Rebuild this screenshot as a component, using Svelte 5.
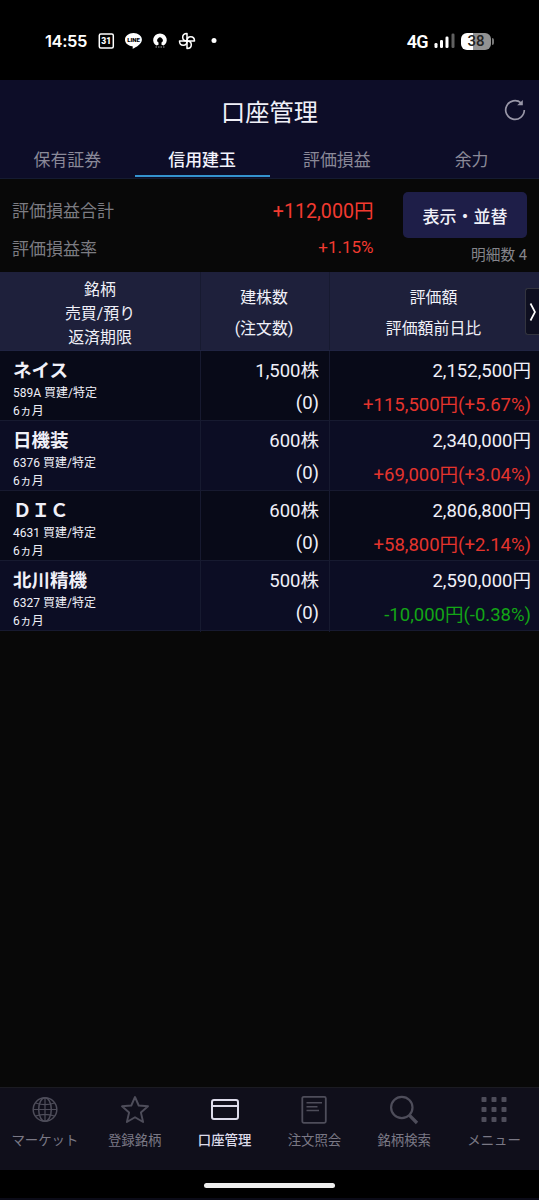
<script>
  let activeTab = 1;
  let activeNav = 2;

  const tabs = ["保有証券", "信用建玉", "評価損益", "余力"];

  const positions = [
    { name: "ネイス", code: "589A", shares: "1,500", value: "2,152,500", change: "+115,500円(+5.67%)" },
    { name: "日機装", code: "6376", shares: "600", value: "2,340,000", change: "+69,000円(+3.04%)" },
    { name: "ＤＩＣ", code: "4631", shares: "600", value: "2,806,800", change: "+58,800円(+2.14%)" },
    { name: "北川精機", code: "6327", shares: "500", value: "2,590,000", change: "-10,000円(-0.38%)" },
  ];

  const navItems = [
    { icon: "globe", label: "マーケット" },
    { icon: "star", label: "登録銘柄" },
    { icon: "card", label: "口座管理" },
    { icon: "doc", label: "注文照会" },
    { icon: "search", label: "銘柄検索" },
    { icon: "grid", label: "メニュー" },
  ];

  const dots = [0, 10, 20];
</script>

<div class="screen">
  <div class="status">
    <span class="clock">14:55</span>
    <svg class="notifications" width="130" height="24" viewBox="98 29 130 24">
      <rect x="99.3" y="34" width="14" height="14" rx="1.5" fill="none" stroke="#fff" stroke-width="1.5" />
      <text x="106.3" y="44.1" class="tiny" font-size="8.5" fill="#fff">31</text>
      <path d="M133.500 33c-4.800 0-8.500 3-8.500 6.700 0 3.300 3 6 7.200 6.600l.6.300-.2 2.200c3.500-1.500 9.300-5 9.300-9.100 0-3.700-3.700-6.700-8.400-6.700z" fill="#fff" />
      <text x="133.500" y="41.900" class="tiny" font-size="6" fill="#000">LINE</text>
      <path d="M156.500 45.500c-5.500-2.500-4-12 3.500-12s9 9.500 3.500 12l-2-.8v-2.200a2.700 2.700 0 1 0-3 0v2.200z" fill="#fff" />
      <path d="M155.500 47h10" stroke="#999" stroke-width="1" stroke-dasharray="1.500 1" />
      <g fill="none" stroke="#fff" stroke-width="1.500" stroke-linejoin="round">
        <path d="M187 41v-7.500c-2.600 0-4.300 1.600-4.300 3.800s1.800 3.700 4.300 3.700" />
        <path d="M187 41h7.500c0-2.600-1.600-4.300-3.800-4.300s-3.700 1.800-3.700 4.300" />
        <path d="M187 41v7.500c2.600 0 4.300-1.600 4.300-3.800s-1.800-3.700-4.300-3.700" />
        <path d="M187 41h-7.500c0 2.600 1.600 4.300 3.800 4.300s3.700-1.800 3.700-4.300" />
      </g>
      <circle cx="214" cy="40.500" r="2.500" fill="#fff" />
    </svg>
    <span class="network">4G</span>
    <svg class="signal" width="22" height="16" viewBox="0 0 22 16">
      <rect x="0.500" y="10" width="3" height="5" rx="1.300" fill="#fff" />
      <rect x="6" y="7" width="3" height="8" rx="1.300" fill="#fff" />
      <rect x="11.500" y="3.500" width="3" height="11.500" rx="1.300" fill="#fff" />
      <rect x="17.500" y="0.500" width="3" height="14.500" rx="1.300" fill="#606060" />
    </svg>
    <div class="battery">38</div>
    <div class="battery-tip"></div>
  </div>

  <header>
    <div class="title-bar">
      <h1>口座管理</h1>
      <svg class="refresh" width="24" height="24" viewBox="0 0 24 24">
        <path d="M21.300 12a9.300 9.300 0 1 1-3.300-7.100" fill="none" stroke="#9997a8" stroke-width="1.700" />
        <path d="M19.800 2v5.300h-5.600z" fill="#9997a8" />
      </svg>
    </div>
    <nav class="tabs">
      {#each tabs as tab, i}
        <button class="tab" class:active={i === activeTab} on:click={() => (activeTab = i)}>{tab}</button>
      {/each}
    </nav>
  </header>

  <section class="summary">
    <div class="totals">
      <div class="total"><span>評価損益合計</span><b class="amount">+112,000円</b></div>
      <div class="total"><span>評価損益率</span><b>+1.15%</b></div>
    </div>
    <div class="controls">
      <button class="sort">表示・並替</button>
      <span class="count">明細数 4</span>
    </div>
  </section>

  <div class="table-head">
    <div class="three"><span>銘柄</span><span>売買/預り</span><span>返済期限</span></div>
    <div><span>建株数</span><span>(注文数)</span></div>
    <div><span>評価額</span><span>評価額前日比</span></div>
    <button class="next" aria-label="次へ">
      <svg width="8" height="20" viewBox="0 0 8 20">
        <path d="M1.500 1.500L6 10L1.500 18.500" fill="none" stroke="#fff" stroke-width="1.700" />
      </svg>
    </button>
  </div>

  <main>
    {#each positions as p}
      <div class="row">
        <div class="issue">
          <strong>{p.name}</strong>
          <span>{p.code} 買建/特定</span>
          <span>6ヵ月</span>
        </div>
        <div class="figures shares">
          <span>{p.shares}株</span>
          <span class="orders">(0)</span>
        </div>
        <div class="figures">
          <span>{p.value}円</span>
          <span class="change" class:down={p.change[0] === "-"}>{p.change}</span>
        </div>
      </div>
    {/each}
  </main>

  <nav class="bottom">
    {#each navItems as item, i}
      <button class="item" class:active={i === activeNav} on:click={() => (activeNav = i)}>
        <svg width="30" height="30" viewBox="0 0 30 30" fill="none" stroke="currentColor" stroke-width="1.500">
          {#if item.icon === "globe"}
            <circle cx="15" cy="14.500" r="11.800" />
            <ellipse cx="15" cy="14.500" rx="6.300" ry="11.800" />
            <path d="M15 2.700v23.600M3.200 14.500h23.600M5.500 8q9.500 3.200 19 0M5.500 21q9.500-3.200 19 0" stroke-width="1.200" />
          {:else if item.icon === "star"}
            <path d="M15 2l3.700 8.500l9.300.8l-7.100 6.200l2.200 9.500L15 22.200l-8.100 4.800l2.200-9.500l-7.100-6.200l9.300-.8z" stroke-width="1.900" stroke-linejoin="round" />
          {:else if item.icon === "card"}
            <rect x="2" y="5" width="26" height="19" rx="2" stroke-width="2" />
            <path d="M2 11h26" stroke-width="2" />
          {:else if item.icon === "doc"}
            <rect x="3.300" y="1.800" width="23.500" height="26" rx="1.500" stroke-width="1.800" />
            <path d="M7.500 7.700h15.500M7.500 11.700h11M7.500 15.500h12.500" />
          {:else if item.icon === "search"}
            <circle cx="12.800" cy="12.500" r="10.700" stroke-width="2.200" />
            <path d="M20.500 20.300l7.500 7.700" stroke-width="3.300" />
          {:else}
            {#each dots as y}
              {#each dots as x}
                <rect x={x + 2.500} y={y + 2} width="5" height="5" rx="0.800" fill="currentColor" stroke="none" />
              {/each}
            {/each}
          {/if}
        </svg>
        <span>{item.label}</span>
      </button>
    {/each}
  </nav>
  <div class="gesture"><div class="handle"></div></div>
</div>

<style>
  :global(body) {
    margin: 0;
    background: #000;
  }
  .screen {
    width: 539px;
    height: 1200px;
    display: flex;
    flex-direction: column;
    overflow: hidden;
    background: #080808;
    color: #f0f0f8;
    font-family: Roboto, "Noto Sans CJK JP", sans-serif;
  }
  .screen * {
    box-sizing: border-box;
  }
  button {
    padding: 0;
    border: 0;
    background: none;
    color: inherit;
    font: inherit;
  }

  /* system status bar */
  .status {
    flex: none;
    height: 80px;
    display: flex;
    align-items: center;
    padding: 2px 45px 0 45px;
    background: #000;
    color: #fff;
  }
  .clock {
    width: 53px;
    font: 600 16.500px/24px Inter, sans-serif;
    letter-spacing: -0.400px;
  }
  .tiny {
    font-family: Roboto, sans-serif;
    font-weight: 900;
    text-anchor: middle;
  }
  .network {
    margin-left: auto;
    font-size: 18px;
    font-weight: 600;
    letter-spacing: -0.600px;
  }
  .signal {
    margin-left: 6px;
  }
  .battery {
    width: 30px;
    height: 17px;
    margin-left: 5px;
    border-radius: 6px;
    background: linear-gradient(90deg, #fff 40%, #929292 40%);
    color: #222;
    font: 500 15px/17px Roboto, sans-serif;
    text-align: center;
  }
  .battery-tip {
    width: 2px;
    height: 7px;
    margin-left: 1px;
    border-radius: 0 2px 2px 0;
    background: #777;
  }

  header {
    flex: none;
    height: 99px;
    background: #0d0d28;
    border-bottom: 1px solid #151b31;
  }
  .title-bar {
    height: 64px;
    display: grid;
    grid-template-columns: 1fr auto 1fr;
    align-items: center;
    padding-right: 12px;
  }
  h1 {
    grid-column: 2;
    margin: 1px 0 0 12px;
    font-size: 24.200px;
    font-weight: 400;
    line-height: 36px;
  }
  .refresh {
    justify-self: end;
    margin-bottom: 4px;
  }
  .tabs {
    height: 33px;
    display: grid;
    grid-template-columns: repeat(4, 1fr);
  }
  .tab {
    padding-top: 2px;
    border-bottom: 2px solid transparent;
    color: #8a8998;
    font-size: 16.900px;
    line-height: 29px;
  }
  .tab.active {
    border-color: #3493cf;
    color: #f2f2fc;
    font-weight: 500;
  }

  .summary {
    flex: none;
    height: 93px;
    display: flex;
    justify-content: space-between;
    padding: 13px 12px 0;
  }
  .totals {
    width: 361.500px;
    margin-top: -2px;
  }
  .total {
    height: 38px;
    display: flex;
    align-items: center;
    justify-content: space-between;
    color: #7c7c82;
    font-size: 17px;
  }
  .total b {
    color: #f23a30;
    font-weight: 400;
  }
  .total .amount {
    font-size: 19.600px;
  }
  .controls {
    width: 124px;
    display: flex;
    flex-direction: column;
    align-items: flex-end;
  }
  .sort {
    width: 124px;
    height: 46px;
    border-radius: 5px;
    background: #1e1e48;
    font-size: 17px;
    font-weight: 500;
  }
  .count {
    margin-top: 5px;
    color: #85858b;
    font-size: 14.700px;
    line-height: 24px;
  }

  .table-head,
  .row {
    flex: none;
    display: grid;
    grid-template-columns: 200px 129px 210px;
  }
  .table-head {
    position: relative;
    height: 79px;
    background: #1e203b;
    border-bottom: 1px solid #202442;
    font-size: 15.900px;
  }
  .table-head > div {
    display: flex;
    flex-direction: column;
    align-items: center;
    padding: 10px 2px 0 0;
    line-height: 31px;
    border-left: 1px solid #171a30;
  }
  .table-head > .three {
    padding: 6px 0 0;
    border: 0;
    line-height: 24px;
  }
  /* overlaps the last column, flush with the screen edge */
  .next {
    position: absolute;
    top: 16px;
    right: 0;
    width: 14px;
    height: 47px;
    display: flex;
    align-items: center;
    justify-content: center;
    border: 1px solid #33343e;
    border-right: 0;
    border-radius: 3px 0 0 3px;
    background: #0e0f20;
  }

  main {
    flex: 1;
  }
  .row {
    height: 70px;
    background: #080a18;
    border-bottom: 1px solid #171a30;
  }
  .row:nth-child(even) {
    background: #0c0d24;
  }
  .row > div {
    display: flex;
    flex-direction: column;
  }
  .issue {
    padding: 7px 0 0 13px;
    font-size: 12px;
    line-height: 17.500px;
  }
  .issue strong {
    margin-bottom: 1px;
    font-size: 18.500px;
    font-weight: 700;
    line-height: 26px;
  }
  .figures {
    align-items: flex-end;
    padding: 3px 8px 0 0;
    border-left: 1px solid #171a30;
    font-size: 18.500px;
    line-height: 34px;
  }
  .shares {
    padding-right: 10px;
  }
  .orders {
    line-height: 31px;
  }
  .change {
    color: #e5342d;
  }
  .down {
    color: #13a516;
  }

  .bottom {
    flex: none;
    height: 83px;
    display: grid;
    grid-template-columns: repeat(6, 1fr);
    background: #100f1b;
    border-top: 1px solid #1b1b22;
  }
  .item {
    display: flex;
    flex-direction: column;
    align-items: center;
    padding-top: 7px;
    color: #4e4d5a;
  }
  .item span {
    margin-top: 6px;
    color: #7a7885;
    font-size: 13.400px;
    line-height: 20px;
    white-space: nowrap;
  }
  .item.active,
  .item.active span {
    color: #dddbea;
  }
  .item.active span {
    font-weight: 500;
  }
  .gesture {
    flex: none;
    height: 30px;
    padding-top: 13px;
    background: #000;
    border-bottom: 2px solid #0b0b18;
  }
  .handle {
    width: 131px;
    height: 5px;
    margin: 0 auto;
    border-radius: 3px;
    background: #eee;
  }
</style>
